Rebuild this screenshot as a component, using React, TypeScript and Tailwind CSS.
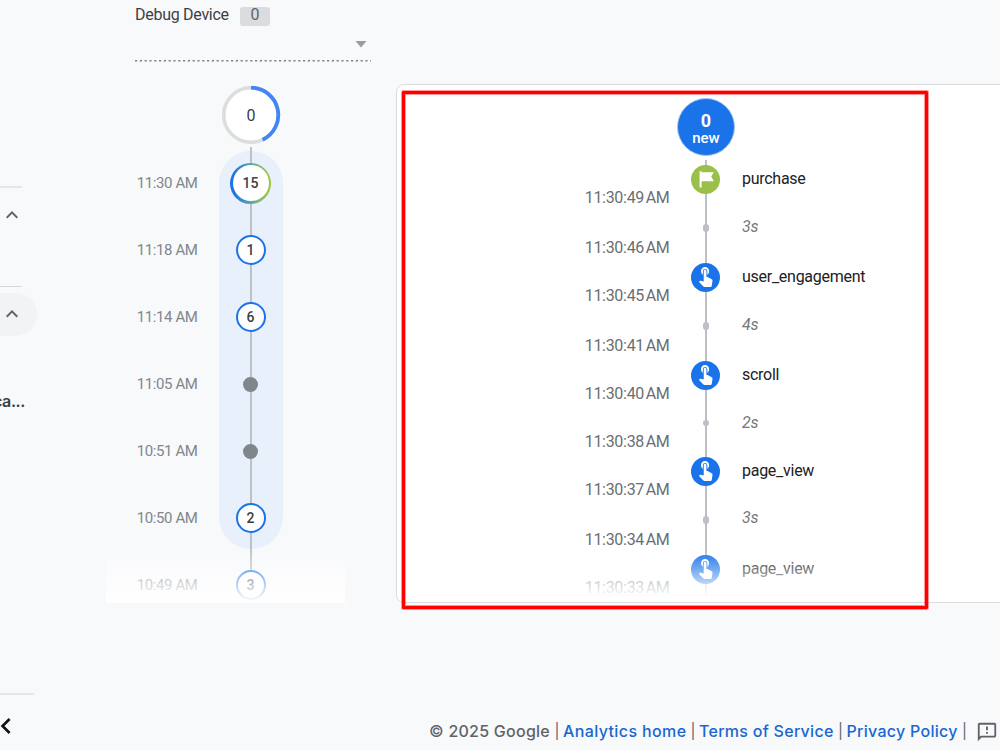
import { MdKeyboardArrowUp, MdChevronLeft, MdOutlineFeedback } from 'react-icons/md';

interface Minute {
    time: string;
    count?: number;
    mixed?: boolean;
}

interface StreamRow {
    id: number;
    kind: 'conversion' | 'event' | 'gap';
    label: string;
    time: string;
    height: string;
    timeOffset: string;
    labelOffset: string;
    dot?: string;
}

const minutes: Minute[] = [
    { time: '11:30 AM', count: 15, mixed: true },
    { time: '11:18 AM', count: 1 },
    { time: '11:14 AM', count: 6 },
    { time: '11:05 AM' },
    { time: '10:51 AM' },
    { time: '10:50 AM', count: 2 },
    { time: '10:49 AM', count: 3 }
];

const stream: StreamRow[] = [
    { id: 1, kind: 'conversion', label: 'purchase', time: '11:30:49 AM', height: 'h-12', timeOffset: 'pt-[37px]', labelOffset: 'pb-0' },
    { id: 2, kind: 'gap', label: '3s', time: '11:30:46 AM', height: 'h-[50px]', timeOffset: 'pt-10', labelOffset: 'pb-[3px]', dot: 'h-2' },
    { id: 3, kind: 'event', label: 'user_engagement', time: '11:30:45 AM', height: 'h-12', timeOffset: 'pt-[38px]', labelOffset: 'pb-0' },
    { id: 4, kind: 'gap', label: '4s', time: '11:30:41 AM', height: 'h-[50px]', timeOffset: 'pt-10', labelOffset: 'pb-0.5', dot: 'h-2' },
    { id: 5, kind: 'event', label: 'scroll', time: '11:30:40 AM', height: 'h-12', timeOffset: 'pt-[37px]', labelOffset: 'pb-0' },
    { id: 6, kind: 'gap', label: '2s', time: '11:30:38 AM', height: 'h-12', timeOffset: 'pt-[38px]', labelOffset: 'pb-0', dot: 'h-1.5' },
    { id: 7, kind: 'event', label: 'page_view', time: '11:30:37 AM', height: 'h-12', timeOffset: 'pt-[38px]', labelOffset: 'pb-0' },
    { id: 8, kind: 'gap', label: '3s', time: '11:30:34 AM', height: 'h-[50px]', timeOffset: 'pt-10', labelOffset: 'pb-1', dot: 'h-2' },
    { id: 9, kind: 'event', label: 'page_view', time: '11:30:33 AM', height: 'h-12', timeOffset: 'pt-[38px]', labelOffset: 'pb-px' }
];

function Sidebar() {
    return (
        <aside className="flex h-full w-[106px] shrink-0 flex-col">
            <div className="mt-[186px] h-0.5 w-[22px] bg-[#e4e6e9]" />
            <MdKeyboardArrowUp className="mt-[15px] h-6 w-6 text-[#5f6368]" />
            <div className="mt-[59px] h-px w-[22px] bg-[#d5d7da]" />
            <div className="mt-1.5 flex h-[43px] w-[37px] items-center rounded-r-full bg-[#f1f3f4] pb-0.5">
                <MdKeyboardArrowUp className="h-6 w-6 shrink-0 text-[#5f6368]" />
            </div>
            <div className="mt-[55px] flex w-[25px] justify-end font-['Inter',sans-serif] text-base leading-5 font-semibold tracking-[-0.4px] text-[#3c4043]">
                ca...
            </div>
            <div className="mt-[282px] h-0.5 w-[34px] bg-[#e4e6e9]" />
            <MdChevronLeft className="mt-[15px] -ml-2.5 h-8 w-8 text-[#111]" />
        </aside>
    );
}

function MinuteBadge({ minute }: { minute: Minute }) {
    if (minute.count === undefined) {
        return <span className="h-[15px] w-[15px] rounded-full bg-[#80868b]" />;
    }
    if (minute.mixed) {
        return (
            <span className="flex h-[41px] w-[41px] items-center justify-center rounded-full bg-linear-to-r from-[#1a73e8] from-10% to-[#9ac63f] to-90%">
                <span className="flex h-9 w-9 items-center justify-center rounded-full bg-white text-sm font-medium text-[#3c4043]">
                    {minute.count}
                </span>
            </span>
        );
    }
    return (
        <span className="mb-px flex h-[30px] w-[30px] items-center justify-center rounded-full border-[2.5px] border-[#1a73e8] bg-white pt-px text-sm font-medium text-[#3c4043]">
            {minute.count}
        </span>
    );
}

function DebugDevice() {
    return (
        <div className="ml-[29px] w-[236px]">
            <div className="flex h-[30px] items-center">
                <span className="w-[94px] text-base leading-none tracking-[-0.28px] whitespace-nowrap text-[#3c4043]">Debug Device</span>
                <span className="mt-0.5 ml-[11px] flex h-[19px] w-[30px] items-center justify-center rounded-[3px] bg-[#dadce0] pb-0.5 text-base text-[#5f6368]">
                    0
                </span>
            </div>
            <div className="flex h-[30px] justify-end pt-[11px] pr-1">
                <svg width="12" height="7" viewBox="0 0 12 7" fill="#9b9c9e">
                    <path d="M0.5 0h11L6 6.5z" />
                </svg>
            </div>
            <svg className="block" width="236" height="2">
                <path d="M0 0.8H236" stroke="#80868b" strokeWidth="1.4" strokeDasharray="2.2 2.6" />
            </svg>
        </div>
    );
}

function MinutesColumn() {
    return (
        <section className="flex w-[290px] shrink-0 flex-col">
            <DebugDevice />
            <div className="relative mt-6 h-[517px] w-[239px]">
                <div className="absolute top-[65px] left-[113px] h-[398px] w-[63.5px] rounded-full bg-[#e8f0fb]" />
                <div className="absolute top-[61px] left-[143.7px] h-[440px] w-[2px] bg-[#bdc1c6]" />
                <div className="relative flex flex-col">
                    <div className="flex h-[59px] justify-center pl-[50px]">
                        <svg width="60" height="60" viewBox="0 0 60 60">
                            <circle cx="30" cy="29" r="27.3" fill="#fff" stroke="#dcdddd" strokeWidth="3.6" />
                            <path d="M30 1.7a27.3 27.3 0 0 1 11.6 52" fill="none" stroke="#4285f4" strokeWidth="3.8" />
                            <text x="30" y="34.5" textAnchor="middle" fontSize="16" fill="#3c4043">0</text>
                        </svg>
                    </div>
                    <div className="mt-[4.5px] flex flex-col">
                        {minutes.map((minute) => (
                            <div key={minute.time} className="flex h-[67px] items-center">
                                <span className="w-[91.5px] pt-px text-right text-[15px] tracking-[-0.4px] whitespace-nowrap text-[#80868b]">{minute.time}</span>
                                <span className="ml-[21.5px] flex w-[63px] justify-center">
                                    <MinuteBadge minute={minute} />
                                </span>
                            </div>
                        ))}
                    </div>
                </div>
                <div className="absolute inset-x-0 bottom-0 h-[56px] bg-linear-to-b from-[#ffffff00] to-white" />
            </div>
        </section>
    );
}

function TouchIcon() {
    return (
        <svg className="ml-px h-5 w-[13.5px]" viewBox="4.75 3 15 21" preserveAspectRatio="none" fill="#fff">
            <path d="M9 11.24V7.5a2.5 2.5 0 0 1 5 0v3.74c1.21-.81 2-2.18 2-3.74C16 5.01 13.99 3 11.5 3S7 5.01 7 7.5c0 1.56.79 2.93 2 3.74zm9.84 4.63l-4.54-2.26c-.17-.07-.35-.11-.54-.11H13v-6c0-.83-.67-1.5-1.5-1.5S10 6.67 10 7.5v10.74l-3.43-.72c-.08-.01-.15-.03-.24-.03-.31 0-.59.13-.79.33l-.79.8 4.94 4.94c.27.27.65.44 1.06.44h6.79c.75 0 1.33-.55 1.44-1.28l.75-5.27c.01-.07.02-.14.02-.2 0-.62-.38-1.16-.91-1.38z" />
        </svg>
    );
}

function StreamNode({ row }: { row: StreamRow }) {
    if (row.kind === 'gap') {
        return <span className={`w-1.5 rounded-full bg-[#bdc1c6] ${row.dot}`} />;
    }
    if (row.kind === 'conversion') {
        return (
            <span className="flex h-[29px] w-[29px] items-center justify-center rounded-full bg-[#9ac04a]">
                <svg width="29" height="29" viewBox="0 0 29 29" fill="#fff">
                    <path d="M8.6 6.2h2v16.4h-2zM10.6 7.2h12.2l-2.6 4.4 2.6 4.6H10.6z" />
                </svg>
            </span>
        );
    }
    return (
        <span className="flex h-[29px] w-[29px] items-center justify-center rounded-full bg-[#1a73e8]">
            <TouchIcon />
        </span>
    );
}

function SecondsStream() {
    return (
        <section className="relative mt-[84px] h-[519px] w-[620px] shrink-0 rounded-lg border border-[#dadce0] bg-white">
            <div className="absolute top-[75px] left-[308px] h-[438px] w-[2px] bg-[#bdc1c6]" />
            <div className="relative flex flex-col pt-[13px]">
                <div className="ml-[280px] flex h-[58px] w-[58px] flex-col items-center justify-center rounded-full border border-[#a9c4ec] bg-[#1a73e8] pt-1 text-white">
                    <span className="text-lg leading-[18px] font-bold">0</span>
                    <span className="text-[15px] leading-[17px] font-medium">new</span>
                </div>
                <div className="-mt-px flex flex-col">
                    {stream.map((row) => (
                        <div key={row.id} className={`flex items-center ${row.height}`}>
                            <span className={`w-[272.5px] text-right text-base leading-5 tracking-[-0.3px] [word-spacing:-2px] whitespace-nowrap text-[#6b6f74] ${row.timeOffset}`}>
                                {row.time}
                            </span>
                            <span className="ml-[21.5px] flex w-[29px] justify-center">
                                <StreamNode row={row} />
                            </span>
                            <span
                                className={`ml-[22px] text-base leading-5 tracking-[-0.27px] ${row.labelOffset} ${row.kind === 'gap' ? 'text-[#74797e] italic' : 'text-[#202124]'}`}
                            >
                                {row.label}
                            </span>
                        </div>
                    ))}
                </div>
            </div>
            <div className="absolute inset-x-2 bottom-1 h-[48px] bg-linear-to-b from-[#ffffff00] to-white" />
        </section>
    );
}

function Footer() {
    return (
        <footer className="absolute top-[719px] left-[429px] flex h-6 items-center font-['Inter',sans-serif] text-base font-medium whitespace-nowrap text-[#5f6368]">
            <span className="w-[122px] tracking-[0.25px]">© 2025 Google</span>
            <span className="w-3 text-center text-[15px] font-normal">|</span>
            <a className="w-[124px] tracking-[0.38px] text-[#1967d2]">Analytics home</a>
            <span className="w-3 text-center text-[15px] font-normal">|</span>
            <a className="w-[135.5px] tracking-[0.28px] text-[#1967d2]">Terms of Service</a>
            <span className="w-3 text-center text-[15px] font-normal">|</span>
            <a className="w-[112px] tracking-[0.28px] text-[#1967d2]">Privacy Policy</a>
            <span className="w-3 text-center text-[15px] font-normal">|</span>
            <MdOutlineFeedback className="mt-0.5 ml-[5px] h-[22px] w-[22px]" />
        </footer>
    );
}

export default function App() {
    return (
        <div className="relative flex h-[750px] w-[1000px] overflow-hidden bg-[#f8f9fb] font-['Roboto',sans-serif]">
            <Sidebar />
            <MinutesColumn />
            <SecondsStream />
            <Footer />
            {/* highlight frame over the seconds stream */}
            <div className="absolute top-[91px] left-[402px] h-[518px] w-[526px] rounded-[1px] border-3 border-[#ff0000] shadow-[0_0_0_1px_rgba(255,0,0,0.4),inset_0_0_0_1px_rgba(255,0,0,0.4)]" />
        </div>
    );
}
